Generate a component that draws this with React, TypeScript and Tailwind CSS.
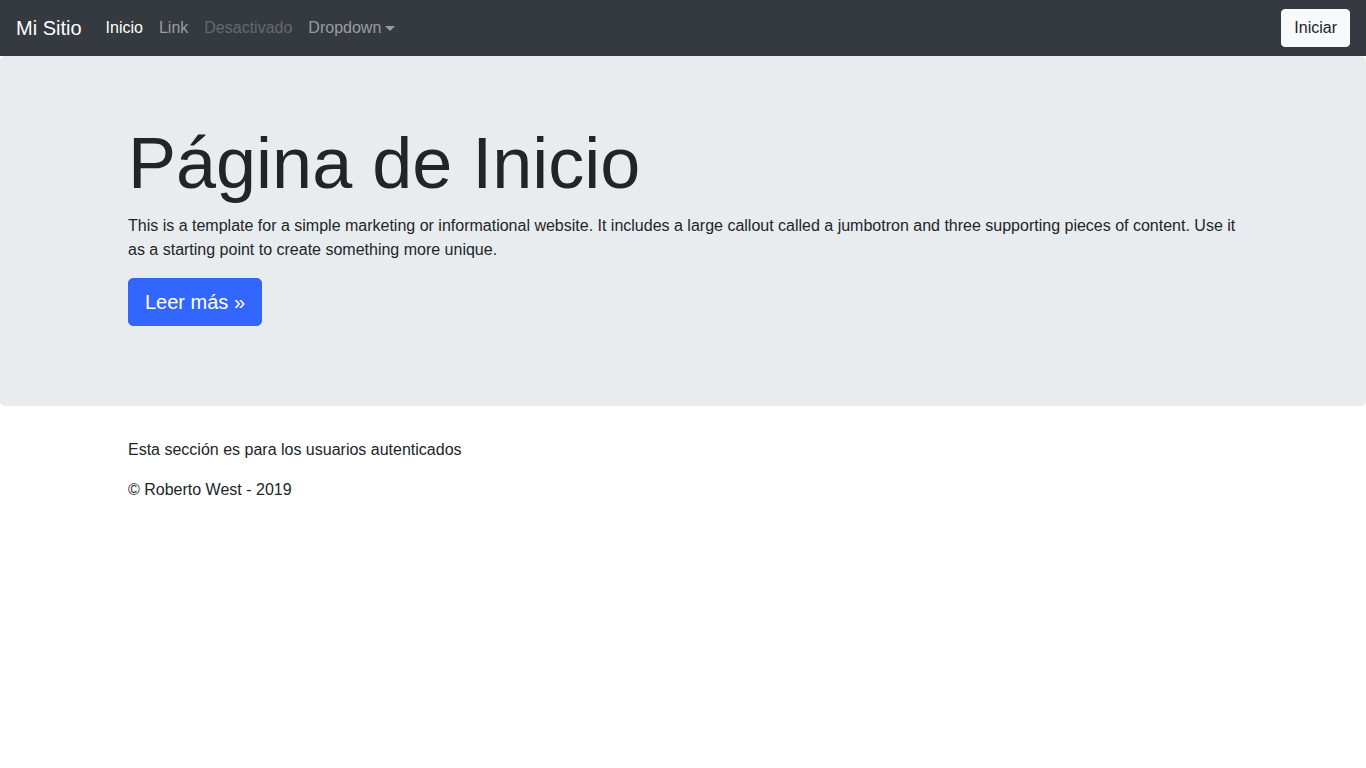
export default function App() {
  return (
    <div className="min-h-screen bg-white text-[#212529] font-['Liberation_Sans',Arial,sans-serif] text-base leading-6">
      <nav className="flex h-14 items-center justify-between bg-[#343a40] px-4">
        <div className="flex items-center">
          <a href="#" className="mr-4 py-[5px] text-xl leading-[30px] text-white">
            Mi Sitio
          </a>
          <ul className="flex items-center">
            <li>
              <a href="#" className="block px-2 py-2 text-white">
                Inicio
              </a>
            </li>
            <li>
              <a href="#" className="block px-2 py-2 text-white/50">
                Link
              </a>
            </li>
            <li>
              <span className="block px-2 py-2 text-white/25">Desactivado</span>
            </li>
            <li>
              <a href="#" className="flex items-center px-2 py-2 text-white/50">
                Dropdown
                <span className="ml-[4px] mt-[1px] inline-block h-0 w-0 border-x-[5px] border-t-[5px] border-x-transparent border-t-white/50" />
              </a>
            </li>
          </ul>
        </div>
        <button className="rounded-[4px] border border-[#f8f9fa] bg-[#f8f9fa] px-3 py-[6px] leading-6 text-[#212529]">
          Iniciar
        </button>
      </nav>

      <div className="mb-8 rounded-[5px] bg-[#e9ecef] px-8 py-16">
        <div className="mx-auto max-w-[1140px] px-[15px]">
          <h1 className="mb-2 text-[72px] font-light leading-[1.2]">Página de Inicio</h1>
          <p className="mb-4">
            This is a template for a simple marketing or informational website. It includes a large callout called a
            jumbotron and three supporting pieces of content. Use it as a starting point to create something more
            unique.
          </p>
          <p className="mb-4">
            <a
              href="#"
              className="inline-block rounded-[5px] border border-[#3366ff] bg-[#3366ff] px-4 py-2 text-xl leading-[30px] text-white"
            >
              Leer más »
            </a>
          </p>
        </div>
      </div>

      <main className="mx-auto max-w-[1140px] px-[15px]">
        <p className="mb-4">Esta sección es para los usuarios autenticados</p>
        <p className="mb-4">© Roberto West - 2019</p>
      </main>
    </div>
  );
}
